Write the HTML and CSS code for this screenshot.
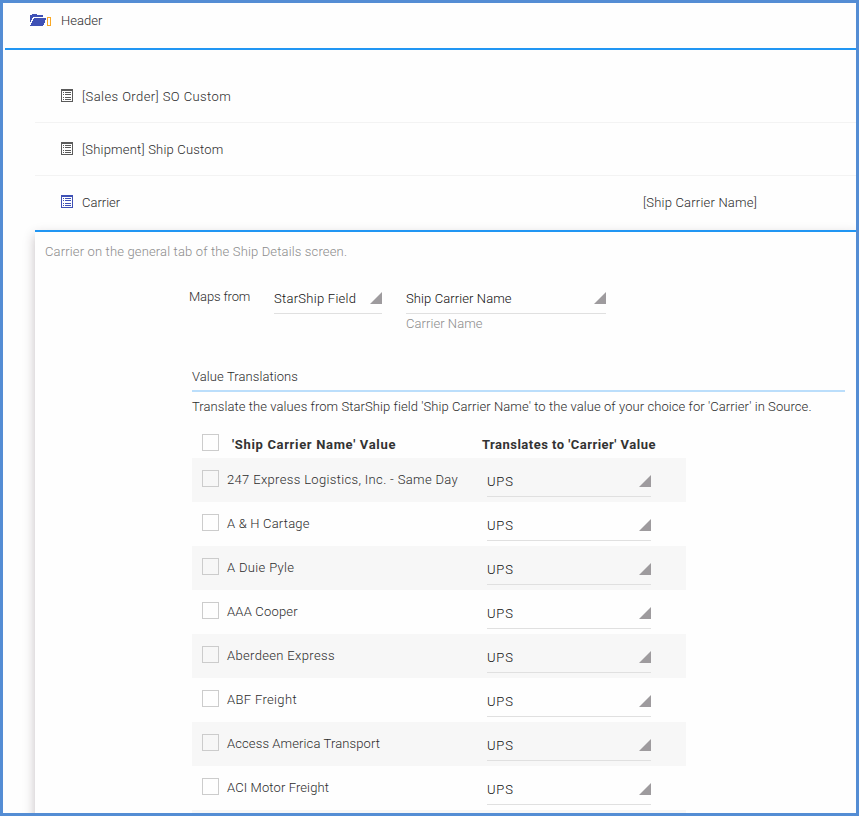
FILE: index.html
```
<!DOCTYPE html>
<html lang="en">
<head>
<meta charset="utf-8">
<title>Field Mapping</title>
<link rel="stylesheet" href="styles.css">
</head>
<body>
<svg width="0" height="0" class="defs" aria-hidden="true">
  <symbol id="list" viewBox="0 0 12 13"><path fill="currentColor" fill-rule="evenodd" d="M0 0h12v13H0zM1 2v10h10V2zM2 3h1v1H2zM4 3h6v1H4zM2 5h1v1H2zM4 5h6v1H4zM2 8h1v1H2zM4 8h6v1H4zM2 10h1v1H2zM4 10h6v1H4z"/></symbol>
</svg>
<div class="frame">
  <header class="top">
    <svg class="folder" width="21" height="13" viewBox="0 0 21 13" shape-rendering="crispEdges"><path fill="#3f51b5" d="M0 1h2V0h5v1h6v2H3v1H2v2H1v2H0zM4 4h12v2h-1v3h-1v2h-1v1H0v-1h1V9h1V7h1V5h1z"/><path fill="#f9a825" fill-rule="evenodd" d="M17 3h4v9h-4zM18 4v7h2V4z"/></svg>
    <span class="title">Header</span>
  </header>
  <main class="tree">
    <div class="item"><svg class="ic"><use href="#list"/></svg><span class="wider">[Sales Order] SO Custom</span></div>
    <div class="item"><svg class="ic"><use href="#list"/></svg><span>[Shipment] Ship Custom</span></div>
    <div class="item open"><svg class="ic blue"><use href="#list"/></svg><span class="name">Carrier</span><span class="source">[Ship Carrier Name]</span></div>
    <section class="panel">
      <p class="desc">Carrier on the general tab of the Ship Details screen.</p>
      <div class="maps">
        <label class="maps-label">Maps from</label>
        <div class="select kind"><span>StarShip Field</span><i></i></div>
        <div class="field"><div class="select"><span>Ship Carrier Name</span><i></i></div><div class="hint">Carrier Name</div></div>
      </div>
      <h2 class="heading">Value Translations</h2>
      <p class="explain">Translate the values from StarShip field 'Ship Carrier Name' to the value of your choice for 'Carrier' in Source.</p>
      <div class="table">
        <div class="head"><b class="box"></b><span class="h1">'Ship Carrier Name' Value</span><span class="h2">Translates to 'Carrier' Value</span></div>
        <div class="row"><b class="box"></b><span class="val wide">247 Express Logistics, Inc. - Same Day</span><div class="select"><span>UPS</span><i></i></div></div>
        <div class="row"><b class="box"></b><span class="val">A &amp; H Cartage</span><div class="select"><span>UPS</span><i></i></div></div>
        <div class="row"><b class="box"></b><span class="val wide">A Duie Pyle</span><div class="select"><span>UPS</span><i></i></div></div>
        <div class="row"><b class="box"></b><span class="val">AAA Cooper</span><div class="select"><span>UPS</span><i></i></div></div>
        <div class="row"><b class="box"></b><span class="val wide">Aberdeen Express</span><div class="select"><span>UPS</span><i></i></div></div>
        <div class="row"><b class="box"></b><span class="val wide">ABF Freight</span><div class="select"><span>UPS</span><i></i></div></div>
        <div class="row"><b class="box"></b><span class="val tight">Access America Transport</span><div class="select"><span>UPS</span><i></i></div></div>
        <div class="row"><b class="box"></b><span class="val tight">ACI Motor Freight</span><div class="select"><span>UPS</span><i></i></div></div>
        <div class="row"></div>
      </div>
    </section>
  </main>
</div>
</body>
</html>
```
FILE: styles.css
```
* { box-sizing: border-box; }
body { margin: 0; font: 300 13px/16px Roboto, "Liberation Sans", sans-serif; letter-spacing: 0.2px; color: #2c2c2c; background: #fff; overflow: hidden; }
p, h2 { margin: 0; font-size: 13px; font-weight: 300; }
.wide { letter-spacing: 0.34px; }
.wider { letter-spacing: 0.42px; }
.tight { letter-spacing: 0.11px; }
.defs { position: absolute; }
.frame { height: 816px; border: 3px solid #548dd4; overflow: hidden; background: #fefefe; }
.top { height: 47px; margin-left: 2px; padding: 10px 0 0 25px; display: flex; align-items: flex-start; border-bottom: 2px solid #2196f3; }
.folder { margin-top: 1px; }
.title { margin-left: 10px; letter-spacing: 0.05px; }
.tree { margin-left: 32px; padding-top: 20px; }
.item { height: 53px; display: flex; align-items: center; padding: 1px 0 0 26px; border-bottom: 1px solid #f3f3f3; }
.item.open { height: 54px; padding: 0 0 1px 26px; border-bottom: 0; }
.ic { width: 12px; height: 13px; margin-right: 9px; margin-top: -2px; shape-rendering: crispEdges; color: #5a5a5a; }
.ic.blue { color: #3f51b5; }
.name { width: 561px; letter-spacing: 0; }
.panel { height: 620px; border-top: 2px solid #2196f3; box-shadow: 0 5px 11px rgba(50, 30, 40, .28); background: #fefefe; padding-top: 12px; }
.desc { margin-left: 10px; color: #8c8c8c; letter-spacing: 0.15px; }
.maps { display: flex; margin: 29px 0 0 154px; height: 60px; }
.maps-label { width: 85px; letter-spacing: -0.15px; }
.select { height: 25px; padding-top: 2px; display: flex; justify-content: space-between; border-bottom: 1px solid #e0e0e0; color: #111; letter-spacing: 0.1px; }
.select i { width: 12px; height: 12px; margin-top: 1px; background: #9e9b9e; clip-path: polygon(100% 0, 100% 100%, 0 100%); }
.kind { width: 108px; margin-right: 24px; letter-spacing: 0.27px; }
.field { width: 200px; }
.hint { color: #8c8c8c; margin-top: 2px; letter-spacing: 0.06px; }
.heading { width: 653px; height: 52px; margin: -9px 0 0 157px; padding-top: 29px; border-bottom: 2px solid #bbdefb; white-space: nowrap; letter-spacing: 0.08px; }
.explain { margin: 7px 0 0 157px; white-space: nowrap; letter-spacing: 0.075px; }
.table { width: 494px; margin: 0 0 0 157px; }
.head { height: 43px; display: flex; padding: 19px 0 0 10px; font-weight: 700; color: #333; white-space: nowrap; }
.box { flex: none; width: 17px; height: 17px; border: 1px solid #ccc; }
.h1 { width: 250px; margin: 3px 0 0 13px; letter-spacing: 0.67px; }
.h2 { margin-top: 3px; letter-spacing: 0.47px; }
.row { height: 44px; display: flex; padding: 12px 0 0 10px; white-space: nowrap; }
.row:nth-child(even) { background: #f7f7f7; }
.val { width: 260px; margin: 2px 0 0 8px; }
.row .select { width: 164px; height: 27px; padding-top: 4px; letter-spacing: 0.8px; }
```
